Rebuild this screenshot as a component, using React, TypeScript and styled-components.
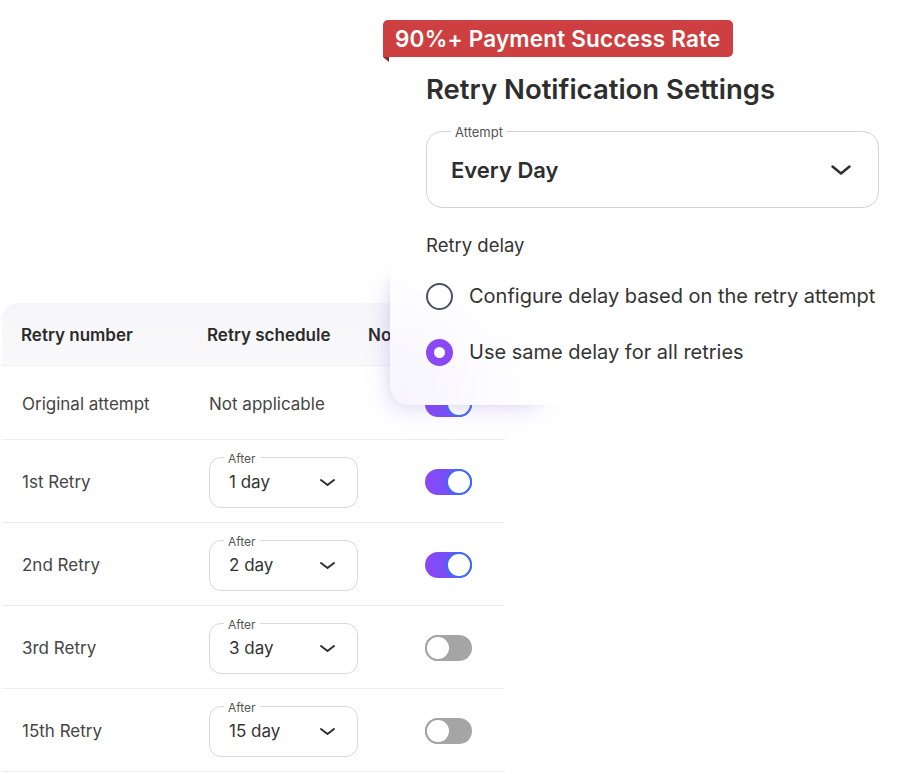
import React from "react";
import styled, { createGlobalStyle } from "styled-components";

const GlobalStyle = createGlobalStyle`
  body {
    margin: 0;
    background: #ffffff;
    font-family: Inter, "Noto Sans", "Liberation Sans", sans-serif;
    color: #2f2f2f;
  }
`;

const Stage = styled.div`
  position: relative;
  width: 918px;
  height: 774px;
  overflow: hidden;
  padding: 303px 0 0 2px;
  box-sizing: border-box;
`;

const Table = styled.div`
  width: 503px;
  display: flex;
  flex-direction: column;
`;

const HeaderRow = styled.div`
  display: grid;
  grid-template-columns: 186px 161px 1fr;
  align-items: center;
  height: 63px;
  padding: 2px 0 0 19px;
  background: linear-gradient(180deg, #f6f6fa 0%, #f9f9fb 100%);
  border-radius: 16px 0 0 0;
  border-bottom: 1px solid #f0f0f3;
  box-sizing: border-box;
`;

const HeaderCell = styled.div`
  font-size: 17px;
  font-weight: 600;
  color: #2b2b2b;
  white-space: nowrap;
`;

const Row = styled.div<{ $h: number }>`
  display: grid;
  grid-template-columns: 187px 159px 1fr;
  align-items: center;
  height: ${(p) => p.$h}px;
  padding: 2px 0 0 20px;
  border-bottom: 1px solid #ececef;
  box-sizing: border-box;
`;

const Cell = styled.div`
  font-size: 17px;
  color: #454545;
  white-space: nowrap;
`;

const DaySelect = styled.div`
  position: relative;
  width: 149px;
  height: 51px;
  border: 1px solid #d8d8d8;
  border-radius: 12px;
  display: flex;
  align-items: center;
  justify-content: space-between;
  padding: 0 21px 0 19px;
  box-sizing: border-box;
  font-size: 17px;
  color: #333333;
`;

const FloatLabel = styled.span<{ $size: number; $left: number }>`
  position: absolute;
  top: ${(p) => -Math.round(p.$size * 0.62)}px;
  left: ${(p) => p.$left}px;
  padding: 0 4px;
  background: #ffffff;
  font-size: ${(p) => p.$size}px;
  font-weight: 400;
  line-height: ${(p) => p.$size + 3}px;
  color: #555555;
`;

const Toggle = styled.div<{ $on: boolean }>`
  width: 47px;
  height: 26px;
  margin-left: 57px;
  border-radius: 13px;
  display: flex;
  justify-content: ${(p) => (p.$on ? "flex-end" : "flex-start")};
  background: ${(p) =>
    p.$on ? "linear-gradient(90deg, #8d45f6 0%, #5a5ef6 100%)" : "#a5a5a5"};
`;

const Knob = styled.div<{ $on: boolean }>`
  width: 22px;
  height: 22px;
  border-radius: 50%;
  background: #ffffff;
  border: 2px solid ${(p) => (p.$on ? "#3f6cf6" : "#a5a5a5")};
`;

/* soft glow that only shows at the card's lower-left corner */
const CardGlow = styled.div`
  position: absolute;
  left: 390px;
  top: 262px;
  width: 170px;
  height: 143px;
  z-index: 1;
  border-radius: 20px;
  box-shadow: -10px 12px 26px -10px rgba(124, 96, 228, 0.24),
    -6px 4px 14px -8px rgba(0, 0, 0, 0.08);
`;

const Card = styled.div`
  position: absolute;
  left: 390px;
  top: 44px;
  width: 560px;
  height: 361px;
  z-index: 2;
  padding: 28px 0 0 36px;
  box-sizing: border-box;
  border-radius: 20px;
  background: radial-gradient(circle at 0% 100%, #f7f4fe 0px, #ffffff 150px);
  display: flex;
  flex-direction: column;
`;

const Badge = styled.div`
  position: absolute;
  left: 383px;
  top: 20px;
  z-index: 3;
  height: 37px;
  padding: 0 12px;
  display: flex;
  align-items: center;
  background: #cd3f40;
  border-radius: 5px 5px 5px 0;
  color: #ffffff;
  font-size: 22.5px;
  font-weight: 600;
  letter-spacing: 0.2px;
  white-space: nowrap;

  &::after {
    content: "";
    position: absolute;
    left: 0;
    bottom: -5px;
    border-top: 5px solid #8f2424;
    border-left: 6px solid transparent;
  }
`;

const Title = styled.h2`
  margin: 0;
  font-size: 27.5px;
  line-height: 34px;
  font-weight: 600;
  color: #2e2e2e;
`;

const AttemptSelect = styled.div`
  position: relative;
  width: 453px;
  height: 77px;
  margin-top: 25px;
  border: 1px solid #d4d4d4;
  border-radius: 16px;
  display: flex;
  align-items: center;
  justify-content: space-between;
  padding: 0 26px 0 24px;
  box-sizing: border-box;
  font-size: 22px;
  font-weight: 600;
  color: #2e2e2e;
`;

const SectionLabel = styled.div`
  margin-top: 26px;
  font-size: 18.5px;
  line-height: 22px;
  color: #333333;
`;

const RadioRow = styled.div<{ $gap: number }>`
  display: flex;
  align-items: center;
  gap: 16px;
  height: 28px;
  margin-top: ${(p) => p.$gap}px;
  font-size: 20px;
  color: #333333;
  white-space: nowrap;
`;

const Radio = styled.div<{ $checked: boolean }>`
  width: 27px;
  height: 27px;
  flex-shrink: 0;
  border-radius: 50%;
  box-sizing: border-box;
  border: ${(p) => (p.$checked ? "8px solid #8b48f6" : "2px solid #4a5263")};
  background: #ffffff;
`;

const Chevron = ({ w, h, stroke }: { w: number; h: number; stroke: number }) => (
  <svg width={w} height={h} viewBox={`0 0 ${w} ${h}`} fill="none">
    <path
      d={`M${stroke} ${stroke} L${w / 2} ${h - stroke} L${w - stroke} ${stroke}`}
      stroke="#2f2f2f"
      strokeWidth={stroke}
      strokeLinecap="round"
      strokeLinejoin="round"
    />
  </svg>
);

const retries = [
  { name: "1st Retry", days: 1, on: true },
  { name: "2nd Retry", days: 2, on: true },
  { name: "3rd Retry", days: 3, on: false },
  { name: "15th Retry", days: 15, on: false },
];

function App() {
  return (
    <Stage>
      <GlobalStyle />
      <Table>
        <HeaderRow>
          <HeaderCell>Retry number</HeaderCell>
          <HeaderCell>Retry schedule</HeaderCell>
          <HeaderCell>Notification</HeaderCell>
        </HeaderRow>
        <Row $h={74}>
          <Cell>Original attempt</Cell>
          <Cell>Not applicable</Cell>
          <Toggle $on>
            <Knob $on />
          </Toggle>
        </Row>
        {retries.map((r) => (
          <Row $h={83} key={r.name}>
            <Cell>{r.name}</Cell>
            <DaySelect>
              <FloatLabel $size={12} $left={14}>
                After
              </FloatLabel>
              <span>{r.days} day</span>
              <Chevron w={17} h={9} stroke={2} />
            </DaySelect>
            <Toggle $on={r.on}>
              <Knob $on={r.on} />
            </Toggle>
          </Row>
        ))}
      </Table>

      <Badge>90%+ Payment Success Rate</Badge>
      <CardGlow />
      <Card>
        <Title>Retry Notification Settings</Title>
        <AttemptSelect>
          <FloatLabel $size={13} $left={24}>
            Attempt
          </FloatLabel>
          <span>Every Day</span>
          <Chevron w={22} h={12} stroke={2.5} />
        </AttemptSelect>
        <SectionLabel>Retry delay</SectionLabel>
        <RadioRow $gap={26}>
          <Radio $checked={false} />
          Configure delay based on the retry attempt
        </RadioRow>
        <RadioRow $gap={28}>
          <Radio $checked />
          Use same delay for all retries
        </RadioRow>
      </Card>
    </Stage>
  );
}

export default App;
